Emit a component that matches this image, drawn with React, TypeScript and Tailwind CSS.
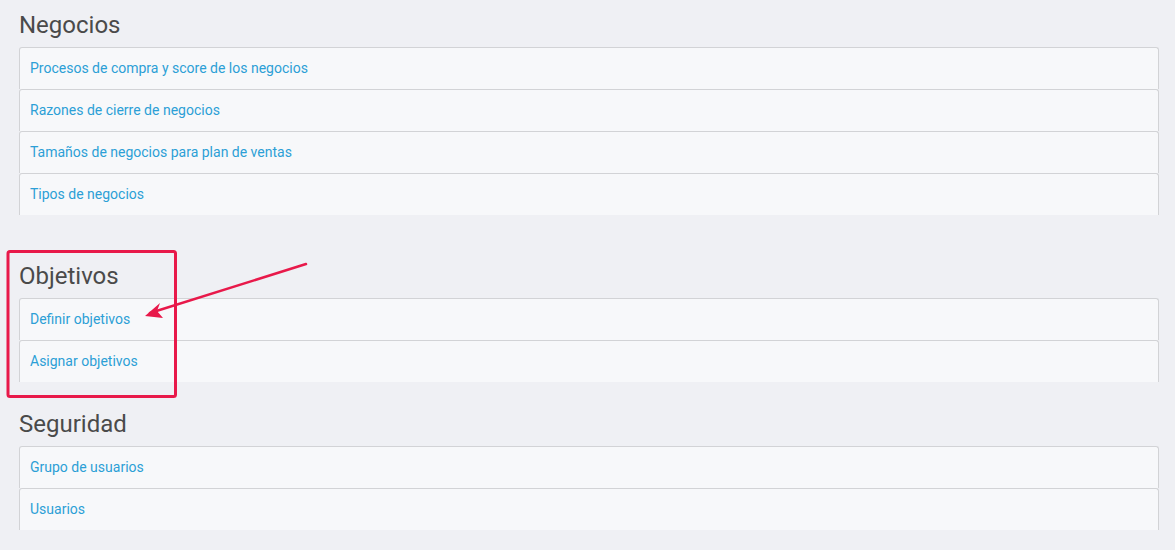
import React from 'react';

const sections = [
  {
    title: 'Negocios',
    items: [
      'Procesos de compra y score de los negocios',
      'Razones de cierre de negocios',
      'Tamaños de negocios para plan de ventas',
      'Tipos de negocios',
    ],
    gap: 'mb-[42px]',
  },
  {
    title: 'Objetivos',
    items: ['Definir objetivos', 'Asignar objetivos'],
    gap: 'mb-[23px]',
  },
  {
    title: 'Seguridad',
    items: ['Grupo de usuarios', 'Usuarios'],
    gap: '',
  },
];

export default function App() {
  return (
    <div className="relative min-h-[550px] w-[1175px] bg-[#eff0f4] pl-[19px] pr-[16px] pt-[6px] font-['Roboto','Liberation_Sans',sans-serif]">
      {sections.map(s => (
        <div key={s.title} className={s.gap}>
          <h2 className="mb-[6px] pt-[3px] text-[24px] leading-[32px] text-[#4a4a4a]">{s.title}</h2>
          <ul>
            {s.items.map(item => (
              <li
                key={item}
                className="flex h-[42px] items-center rounded-t-[3px] border-x border-t border-[#d2d3d6] bg-[#f7f8fa] pl-[10px]"
              >
                <a className="text-[14px] text-[#2c9fd6] cursor-pointer">{item}</a>
              </li>
            ))}
          </ul>
        </div>
      ))}

      {/* highlight box + arrow */}
      <svg className="pointer-events-none absolute left-0 top-0" width="1175" height="550">
        <rect x="8" y="251.5" width="167.5" height="145" rx="2" fill="none" stroke="#e8194a" strokeWidth="3" />
        <line x1="306" y1="264" x2="150" y2="313" stroke="#e8194a" strokeWidth="2.5" strokeLinecap="round" />
        <path d="M145 316 L160 303 L157 311 L163 318 Z" fill="#e8194a" />
      </svg>
    </div>
  );
}
